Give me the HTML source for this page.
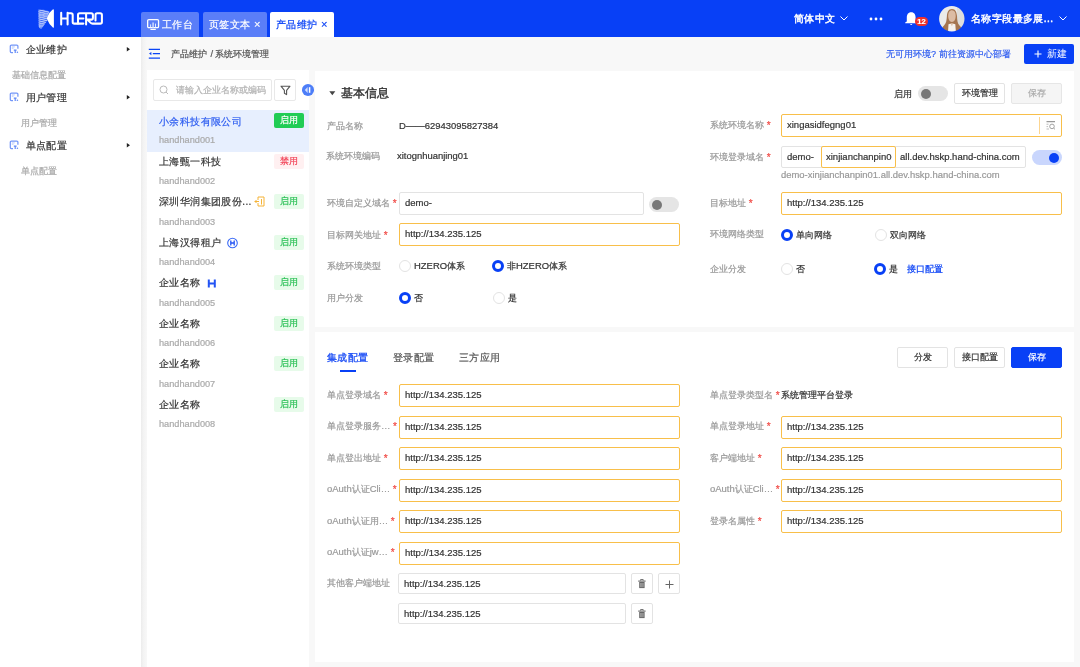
<!DOCTYPE html>
<html><head><meta charset="utf-8">
<style>
*{box-sizing:border-box;margin:0;padding:0}
html,body{width:1080px;height:667px;overflow:hidden;background:#f8f8f8;font-family:"Liberation Sans",sans-serif;color:#333}
div,span{position:absolute;white-space:nowrap}
#hdr{left:0;top:0;width:1080px;height:37px;background:#0840f6}
#side{left:0;top:37px;width:141px;height:630px;background:#fff}
.tab{top:12px;height:25px;background:#5a7ef8;color:#fff;font-size:10px;letter-spacing:0.4px;line-height:25px;border-radius:2px 2px 0 0}
.tab.act{background:#fff;color:#0840f6}
#list{left:147px;top:70px;width:162px;height:597px;background:#fff}
.panel{left:315px;width:759px;background:#fff}
.lbl{font-size:9.45px;color:#999;line-height:12px}
.val{font-size:9.45px;color:#333;line-height:12px}
.req{position:relative;color:#f14a45;font-size:10px;line-height:0;top:0.5px}
.inp{height:23px;border:1px solid #e3e3e3;border-radius:2px;background:#fff;font-size:9.5px;line-height:19px;padding-left:5px;color:#333;overflow:hidden}
.inp.o{border-color:#f8bf4a}
.btn{height:21px;border:1px solid #e3e3e3;border-radius:2px;background:#fff;font-size:9px;line-height:19px;text-align:center;color:#333}
.radio{width:12px;height:12px;border-radius:50%;border:1px solid #e3e3e3;background:#fff}
.radio.on{border:3px solid #0840f6}
.rtxt{font-size:9.45px;color:#333;line-height:12px}
.badge{left:127px;width:30px;height:15px;font-size:9px;line-height:15px;text-align:center;border-radius:2px;background:#e7fbea;color:#2dc158}
.cname{left:12px;font-size:10px;letter-spacing:0.4px;color:#333;line-height:14px}
.ccode{left:12px;font-size:9.2px;color:#aaa;line-height:12px;margin-top:0.5px}
.mi{font-size:10px;letter-spacing:0.4px;color:#333;line-height:14px;margin-left:0.5px}
.si{font-size:9px;color:#aaa;line-height:12px}
.tgl{width:30px;height:15px;border-radius:7.5px;background:#e5e5e5}
.tgl i{position:absolute;left:2.5px;top:2.5px;width:10px;height:10px;border-radius:50%;background:#777}
</style></head><body><div style="left:0;top:0;width:1080px;height:667px;will-change:transform;-webkit-text-stroke:0.2px currentColor">
<!-- HEADER -->
<div id="hdr">
  <svg style="position:absolute;left:36px;top:7px" width="70" height="24" viewBox="36 7 70 24">
    <g fill="none" stroke="#fff" stroke-width="2.05" stroke-linecap="round" stroke-linejoin="round">
      <path d="M61.2 12.7V24.4M61.2 18.5H67.6M67.6 12.7V24.4M67.6 13.2H71Q72.7 13.2 72.7 14.9V21.9Q72.7 23.6 74.4 23.6H83.4"/>
      <path d="M78 23.4V14.9Q78 13.2 79.7 13.2H91.2Q92.9 13.2 92.9 14.9V17.9Q92.9 19.6 91.2 19.6H86.1M78 18.5H83.4M86.1 13.2V24.4M87.6 19.8L90.4 22.6Q91.4 23.6 92.6 23.6H100.2Q101.9 23.6 101.9 21.9V14.9Q101.9 13.2 100.2 13.2H97.2Q95.5 13.2 95.5 14.9V20.4"/>
    </g>
    <defs><clipPath id="hl"><path d="M38.3 9.8Q43 8.8 49.6 11.6L46.9 18.3L47.4 20.6L41.6 28.4Q39.2 29 38.7 26.6Z"/></clipPath></defs><path d="M53.9 10.4Q53.9 8.4 52.4 9.8Q49 12.5 47.2 17.2Q46.7 18.3 47.2 19.4Q49 24 52.4 27Q53.9 28.8 53.9 26.8Z" fill="#fff"/><g clip-path="url(#hl)"><rect x="36" y="7" width="20" height="24" fill="#fff" opacity="0.22"/><g stroke="#fff" stroke-width="0.75" fill="none" opacity="0.7"><path d="M36.0 0.4L56.0 5.4M36.0 2.6L56.0 7.6M36.0 4.8L56.0 9.8M36.0 7.0L56.0 12.0M36.0 9.2L56.0 14.2M36.0 11.4L56.0 16.4M36.0 13.6L56.0 18.6M36.0 15.8L56.0 20.8M36.0 18.0L56.0 23.0M36.0 20.2L56.0 25.2M36.0 22.4L56.0 27.4M36.0 24.6L56.0 29.6M36.0 26.8L56.0 31.8M36.0 29.0L56.0 34.0"/><path d="M36.0 5.4L56.0 0.4M36.0 7.6L56.0 2.6M36.0 9.8L56.0 4.8M36.0 12.0L56.0 7.0M36.0 14.2L56.0 9.2M36.0 16.4L56.0 11.4M36.0 18.6L56.0 13.6M36.0 20.8L56.0 15.8M36.0 23.0L56.0 18.0M36.0 25.2L56.0 20.2M36.0 27.4L56.0 22.4M36.0 29.6L56.0 24.6M36.0 31.8L56.0 26.8M36.0 34.0L56.0 29.0"/></g></g>
  </svg>
  <div class="tab" style="left:141px;width:58px"><svg style="position:absolute;left:6px;top:7px" width="13" height="12" viewBox="0 0 13 12"><rect x="0.65" y="0.65" width="10.9" height="8" rx="1.2" fill="none" stroke="#fff" stroke-width="1.3"/><path d="M3.4 10.4H8.8" stroke="#fff" stroke-width="1.2"/><path d="M3.6 8.4V5.4M8.5 8.4V4.6" stroke="#e6ecfe" stroke-width="1"/><path d="M6.1 8.4V3.6" stroke="#c3d1fc" stroke-width="1.7"/></svg><span style="left:21px;top:0">工作台</span></div>
  <div class="tab" style="left:203px;width:64px"><span style="left:6px;top:0">页签文本</span><span style="left:51px;top:0;font-size:11px">×</span></div>
  <div class="tab act" style="left:270px;width:64px"><span style="left:6px;top:0">产品维护</span><span style="left:51px;top:0;font-size:11px">×</span></div>
  <span style="left:794px;top:12px;font-size:10px;letter-spacing:0.4px;line-height:14px;color:#fff;-webkit-text-stroke:0.45px #fff">简体中文</span>
  <svg style="position:absolute;left:840px;top:16px" width="8" height="5" viewBox="0 0 8 5"><path d="M0.5 0.5L4 4L7.5 0.5" fill="none" stroke="#fff" stroke-width="1"/></svg>
  <svg style="position:absolute;left:869px;top:17px" width="14" height="4"><circle cx="2" cy="2" r="1.4" fill="#fff"/><circle cx="7" cy="2" r="1.4" fill="#fff"/><circle cx="12" cy="2" r="1.4" fill="#fff"/></svg>
  <svg style="position:absolute;left:904px;top:11px" width="14" height="16" viewBox="0 0 14 16"><path d="M7.2 1.2C4 1.2 2.8 3.8 2.8 6.4V10.4L1.2 11.4V12.3H12.2V11.4L11.6 10.4V6.4C11.6 3.8 10.4 1.2 7.2 1.2Z" fill="#fff"/><path d="M6 13Q7.2 14.8 8.4 13Z" fill="#fff"/></svg>
  <div style="left:915px;top:17px;width:13px;height:9px;border-radius:5px;background:#f0302b;color:#fff;font-size:7.5px;font-weight:bold;line-height:9px;text-align:center">12</div>
  <svg style="position:absolute;left:939px;top:6px" width="26" height="26" viewBox="0 0 26 26"><defs><clipPath id="av"><circle cx="12.8" cy="12.7" r="12.7"/></clipPath><filter id="avb" x="-10%" y="-10%" width="120%" height="120%"><feGaussianBlur stdDeviation="0.5"/></filter></defs><g clip-path="url(#av)"><g filter="url(#avb)"><rect width="26" height="26" fill="#ebebea"/><rect x="18" width="8" height="26" fill="#dededc"/><path d="M13 3C9.3 3 8.2 6.5 7.9 10C7.6 14 7.4 17.2 5 19.5C3 21 2.8 24 3.2 26H22.3C22.7 24 22.5 21 20.5 19.5C18.4 17.5 18.2 14 18 10C17.7 6.5 16.6 3 13 3Z" fill="#a57550"/><path d="M13 4.2C10.4 4.2 9.2 6.5 9.2 9.8C9.2 13.5 10.6 16 12.9 16C15.2 16 16.7 13.5 16.7 9.8C16.7 6.5 15.5 4.2 13 4.2Z" fill="#dcbca4"/><path d="M9 26L9.5 18.2Q12.8 16.6 16.3 18.2L16.9 26Z" fill="#f5f2ee"/><path d="M11.9 17.4L12.9 20.2L13.9 17.4Z" fill="#d9b597"/></g></g></svg>
  <span style="left:971px;top:12px;font-size:10px;letter-spacing:0.4px;line-height:14px;color:#fff;-webkit-text-stroke:0.45px #fff">名称字段最多展...</span>
  <svg style="position:absolute;left:1059px;top:16px" width="8" height="5" viewBox="0 0 8 5"><path d="M0.5 0.5L4 4L7.5 0.5" fill="none" stroke="#fff" stroke-width="1"/></svg>
</div>

<!-- SIDEBAR -->
<div style="left:141px;top:37px;width:6px;height:630px;background:linear-gradient(to right,#ececec,#f3f3f3 40%,#f8f8f8)"></div>
<div id="side">
  <svg style="position:absolute;left:9px;top:7px" width="10" height="10" viewBox="9 44 10 10"><path d="M13 52.6H11.4Q10.3 52.6 10.3 51.5V46.1Q10.3 45 11.4 45H16.8Q17.9 45 17.9 46.1V48.8" fill="none" stroke="#7396f8" stroke-width="1.25"/><path d="M11.8 46.9H14.8M11.8 48.2H13.6" stroke="#b3c6fb" stroke-width="0.9"/><path d="M13.8 50.2H16.6M15.2 50.2V53" stroke="#6189f7" stroke-width="1.2"/><circle cx="17.4" cy="52.3" r="0.8" fill="#6189f7"/></svg>
  <span class="mi" style="left:25px;top:6px">企业维护</span>
  <svg style="position:absolute;left:126px;top:9px" width="5" height="7"><path d="M0.8 1L4 3.3L0.8 5.6Z" fill="#222"/></svg>
  <span class="si" style="left:12px;top:32px">基础信息配置</span>
  <svg style="position:absolute;left:9px;top:55px" width="10" height="10" viewBox="9 44 10 10"><path d="M13 52.6H11.4Q10.3 52.6 10.3 51.5V46.1Q10.3 45 11.4 45H16.8Q17.9 45 17.9 46.1V48.8" fill="none" stroke="#7396f8" stroke-width="1.25"/><path d="M11.8 46.9H14.8M11.8 48.2H13.6" stroke="#b3c6fb" stroke-width="0.9"/><path d="M13.8 50.2H16.6M15.2 50.2V53" stroke="#6189f7" stroke-width="1.2"/><circle cx="17.4" cy="52.3" r="0.8" fill="#6189f7"/></svg>
  <span class="mi" style="left:25px;top:54px">用户管理</span>
  <svg style="position:absolute;left:126px;top:57px" width="5" height="7"><path d="M0.8 1L4 3.3L0.8 5.6Z" fill="#222"/></svg>
  <span class="si" style="left:21px;top:80px">用户管理</span>
  <svg style="position:absolute;left:9px;top:103px" width="10" height="10" viewBox="9 44 10 10"><path d="M13 52.6H11.4Q10.3 52.6 10.3 51.5V46.1Q10.3 45 11.4 45H16.8Q17.9 45 17.9 46.1V48.8" fill="none" stroke="#7396f8" stroke-width="1.25"/><path d="M11.8 46.9H14.8M11.8 48.2H13.6" stroke="#b3c6fb" stroke-width="0.9"/><path d="M13.8 50.2H16.6M15.2 50.2V53" stroke="#6189f7" stroke-width="1.2"/><circle cx="17.4" cy="52.3" r="0.8" fill="#6189f7"/></svg>
  <span class="mi" style="left:25px;top:102px">单点配置</span>
  <svg style="position:absolute;left:126px;top:105px" width="5" height="7"><path d="M0.8 1L4 3.3L0.8 5.6Z" fill="#222"/></svg>
  <span class="si" style="left:21px;top:128px">单点配置</span>
</div>

<!-- BREADCRUMB -->
<svg style="position:absolute;left:148px;top:48px" width="13" height="12" viewBox="0 0 13 12"><path d="M0.8 1.4H12M4.8 5.6H12M0.8 10.1H12" stroke="#0b45f6" stroke-width="1.2"/><path d="M3.4 4L1 5.6L3.4 7.2Z" fill="#0b45f6"/></svg>
<span style="left:171px;top:48px;font-size:9px;line-height:12px;color:#555">产品维护</span><span style="left:210.5px;top:48px;font-size:9.45px;line-height:12px;color:#555">/</span><span style="left:215px;top:48px;font-size:9px;line-height:12px;color:#555">系统环境管理</span>
<span style="left:886px;top:48px;font-size:9px;line-height:12px;color:#2e5cf0">无可用环境? 前往资源中心部署</span>
<div style="left:1024px;top:44px;width:50px;height:20px;background:#0840f6;border-radius:2px;color:#fff;font-size:9.5px;line-height:20px"><svg style="position:absolute;left:10px;top:6px" width="8" height="8"><path d="M4 0.5V7.5M0.5 4H7.5" stroke="#fff" stroke-width="1.1"/></svg><span style="left:22.5px;top:0;-webkit-text-stroke:0">新建</span></div>

<!-- LIST -->
<div id="list">
  <div style="left:6px;top:9px;width:119px;height:22px;border:1px solid #e8e8e8;border-radius:2px"><svg style="position:absolute;left:5px;top:5px" width="10" height="10"><circle cx="4.5" cy="4.5" r="3.5" fill="none" stroke="#bbb" stroke-width="1"/><path d="M7 7L9 9" stroke="#bbb"/></svg><span style="left:21.5px;top:4px;font-size:9px;line-height:12px;color:#b3b3b3">请输入企业名称或编码</span></div>
  <div style="left:127px;top:9px;width:22px;height:22px;border:1px solid #e8e8e8;border-radius:2px"><svg style="position:absolute;left:5px;top:5px" width="11" height="11" viewBox="0 0 11 11"><path d="M1 1.2H10L6.6 5.3V9.6L4.4 8.2V5.3Z" fill="none" stroke="#555" stroke-width="1.1" stroke-linejoin="round"/></svg></div>
  <div style="left:154.5px;top:14px;width:12.5px;height:12px;border-radius:50%;background:#4d7ef8"><svg style="position:absolute;left:0;top:0" width="12" height="12" viewBox="0 0 12 12"><path d="M5.6 3V9L2.8 6Z" fill="#d5e0fe"/><path d="M7.6 3.2V8.8" stroke="#fff" stroke-width="1.5"/></svg></div>
  <div style="left:0;top:40px;width:162px;height:42px;background:#e7effe"></div>
  <span class="cname" style="top:45px;color:#2c5cf0">小余科技有限公司</span><span class="ccode" style="top:63.5px">handhand001</span>
  <div class="badge" style="top:43px;background:#20cc55;color:#fff">启用</div>
  <span class="cname" style="top:85px">上海甄一科技</span><span class="ccode" style="top:104px">handhand002</span>
  <div class="badge" style="top:84px;background:#fff0f1;color:#f2465a">禁用</div>
  <span class="cname" style="top:125px">深圳华润集团股份...</span><span class="ccode" style="top:145px">handhand003</span>
  <svg style="position:absolute;left:107px;top:126px" width="11" height="11" viewBox="0 0 11 11"><path d="M4 1H10V10H4V7M4 4V1M7.5 3V8.5" fill="none" stroke="#f5b336" stroke-width="1"/><path d="M0.8 5.5H5M2.5 4L1 5.5L2.5 7" fill="none" stroke="#f5b336" stroke-width="1"/></svg>
  <div class="badge" style="top:124px">启用</div>
  <span class="cname" style="top:166px">上海汉得租户</span><span class="ccode" style="top:185px">handhand004</span>
  <svg style="position:absolute;left:80px;top:167px" width="12" height="12" viewBox="0 0 12 12"><circle cx="5.5" cy="6" r="4.8" fill="none" stroke="#3a6af6" stroke-width="1.1"/><path d="M3.8 3.6V8.4M7.2 3.6V8.4M3.8 6H7.2" stroke="#2354f4" stroke-width="1.3"/></svg>
  <div class="badge" style="top:165px">启用</div>
  <span class="cname" style="top:206px">企业名称</span><span class="ccode" style="top:226px">handhand005</span>
  <svg style="position:absolute;left:60px;top:209px" width="10" height="9" viewBox="0 0 10 9"><path d="M1.8 0.5V8.5M7.8 0.5V8.5M1.8 4.5H7.8" stroke="#2354f4" stroke-width="2"/></svg>
  <div class="badge" style="top:205px">启用</div>
  <span class="cname" style="top:247px">企业名称</span><span class="ccode" style="top:266px">handhand006</span>
  <div class="badge" style="top:246px">启用</div>
  <span class="cname" style="top:287px">企业名称</span><span class="ccode" style="top:307px">handhand007</span>
  <div class="badge" style="top:286px">启用</div>
  <span class="cname" style="top:328px">企业名称</span><span class="ccode" style="top:347px">handhand008</span>
  <div class="badge" style="top:327px">启用</div>
</div>

<!-- PANEL 1 -->
<div class="panel" style="top:71px;height:256px">
  <svg style="position:absolute;left:13.5px;top:20px" width="7" height="5"><path d="M0.3 0.3H6.3L3.3 4.2Z" fill="#444"/></svg>
  <span style="left:26px;top:15px;font-size:12px;letter-spacing:-0.1px;line-height:15px;-webkit-text-stroke:0.4px #333;color:#333">基本信息</span>
  <span class="lbl" style="left:579px;top:17px;color:#333">启用</span>
  <div class="tgl" style="left:603px;top:15px"><i></i></div>
  <div class="btn" style="left:639px;top:12px;width:51px">环境管理</div>
  <div class="btn" style="left:696px;top:12px;width:51px;background:#f5f5f5;border-color:#e6e6e6;color:#aaa">保存</div>

  <span class="lbl" style="left:12px;top:49px">产品名称</span>
  <span class="val" style="left:84px;top:49px">D——62943095827384</span>
  <span class="lbl" style="left:11px;top:79px">系统环境编码</span>
  <span class="val" style="left:82px;top:79px">xitognhuanjing01</span>
  <span class="lbl" style="left:12px;top:126px">环境自定义域名 <span class="req">*</span></span>
  <div class="inp" style="left:84px;top:121px;width:245px">demo-</div>
  <div class="tgl" style="left:334px;top:126px"><i></i></div>
  <span class="lbl" style="left:12px;top:158px">目标网关地址 <span class="req">*</span></span>
  <div class="inp o" style="left:84px;top:152px;width:281px">http://134.235.125</div>
  <span class="lbl" style="left:12px;top:189px">系统环境类型</span>
  <div class="radio" style="left:84px;top:189px"></div><span class="rtxt" style="left:99px;top:189px">HZERO体系</span>
  <div class="radio on" style="left:177px;top:189px"></div><span class="rtxt" style="left:192px;top:189px">非HZERO体系</span>
  <span class="lbl" style="left:12px;top:221px">用户分发</span>
  <div class="radio on" style="left:84px;top:221px"></div><span class="rtxt" style="left:99px;top:221px">否</span>
  <div class="radio" style="left:178px;top:221px"></div><span class="rtxt" style="left:193px;top:221px">是</span>

  <span class="lbl" style="left:395px;top:48px">系统环境名称 <span class="req">*</span></span>
  <div class="inp o" style="left:466px;top:43px;width:281px">xingasidfegng01<div style="left:257px;top:2px;width:1px;height:17px;background:#fcd590"></div><svg style="position:absolute;left:263px;top:5px" width="11" height="11"><path d="M1.5 1.6H10" stroke="#999" stroke-width="1.2"/><path d="M1.5 4.2H3.5M1.5 6.6H3M1.5 9H4" stroke="#aaa" stroke-width="0.8"/><circle cx="7" cy="6.4" r="2.3" fill="none" stroke="#999" stroke-width="0.9"/><path d="M8.7 8.1L10 9.4" stroke="#999" stroke-width="0.9"/></svg></div>
  <span class="lbl" style="left:395px;top:80px">环境登录域名 <span class="req">*</span></span>
  <div class="inp" style="left:466px;top:75px;width:245px;height:22px;border-color:#e3e3e3"></div>
  <span class="val" style="left:472px;top:80px;font-size:9.5px">demo-</span>
  <div class="inp o" style="left:506px;top:75px;width:75px;height:22px;line-height:20px;padding-left:4px">xinjianchanpin0</div>
  <span class="val" style="left:585px;top:80px;font-size:9.5px">all.dev.hskp.hand-china.com</span>
  <div class="tgl" style="left:717px;top:79px;width:30px;background:#c9d6fd"><i style="left:17px;background:#0840f6"></i></div>
  <span class="lbl" style="left:466px;top:98px">demo-xinjianchanpin01.all.dev.hskp.hand-china.com</span>
  <span class="lbl" style="left:395px;top:126px">目标地址 <span class="req">*</span></span>
  <div class="inp o" style="left:466px;top:121px;width:281px">http://134.235.125</div>
  <span class="lbl" style="left:395px;top:157px">环境网络类型</span>
  <div class="radio on" style="left:466px;top:158px"></div><span class="rtxt" style="left:481px;top:158px">单向网络</span>
  <div class="radio" style="left:560px;top:158px"></div><span class="rtxt" style="left:575px;top:158px">双向网络</span>
  <span class="lbl" style="left:395px;top:192px">企业分发</span>
  <div class="radio" style="left:466px;top:192px"></div><span class="rtxt" style="left:481px;top:192px">否</span>
  <div class="radio on" style="left:559px;top:192px"></div><span class="rtxt" style="left:574px;top:192px">是</span>
  <span class="rtxt" style="left:592px;top:192px;color:#0840f6">接口配置</span>
</div>

<!-- PANEL 2 -->
<div class="panel" style="top:332px;height:330px">
  <span style="left:12px;top:19px;font-size:10px;letter-spacing:0.4px;line-height:14px;color:#1a4cf5;-webkit-text-stroke:0.3px #1a4cf5">集成配置</span>
  <div style="left:25px;top:38px;width:16px;height:2px;background:#0840f6"></div>
  <span style="left:78px;top:19px;font-size:10px;letter-spacing:0.4px;line-height:14px;color:#555">登录配置</span>
  <span style="left:144px;top:19px;font-size:10px;letter-spacing:0.4px;line-height:14px;color:#555">三方应用</span>
  <div class="btn" style="left:582px;top:15px;width:51px">分发</div>
  <div class="btn" style="left:639px;top:15px;width:51px">接口配置</div>
  <div class="btn" style="left:696px;top:15px;width:51px;background:#0840f6;border-color:#0840f6;color:#fff">保存</div>

  <span class="lbl" style="left:12px;top:57px">单点登录域名 <span class="req">*</span></span>
  <div class="inp o" style="left:84px;top:52px;width:281px">http://134.235.125</div>
  <span class="lbl" style="left:12px;top:88px">单点登录服务… <span class="req">*</span></span>
  <div class="inp o" style="left:84px;top:84px;width:281px">http://134.235.125</div>
  <span class="lbl" style="left:12px;top:120px">单点登出地址 <span class="req">*</span></span>
  <div class="inp o" style="left:84px;top:115px;width:281px">http://134.235.125</div>
  <span class="lbl" style="left:12px;top:151px">oAuth认证Cli… <span class="req">*</span></span>
  <div class="inp o" style="left:84px;top:147px;width:281px">http://134.235.125</div>
  <span class="lbl" style="left:12px;top:183px">oAuth认证用… <span class="req">*</span></span>
  <div class="inp o" style="left:84px;top:178px;width:281px">http://134.235.125</div>
  <span class="lbl" style="left:12px;top:214px">oAuth认证jw… <span class="req">*</span></span>
  <div class="inp o" style="left:84px;top:210px;width:281px">http://134.235.125</div>
  <span class="lbl" style="left:12px;top:245px">其他客户端地址</span>
  <div class="inp" style="left:83px;top:241px;width:228px;height:21px;line-height:19px">http://134.235.125</div>
  <div class="btn" style="left:316px;top:241px;width:22px;height:21px"><svg style="position:absolute;left:5px;top:4px" width="10" height="11" viewBox="0 0 10 11"><path d="M3.6 2.6V1.5H6.2V2.6" fill="none" stroke="#666" stroke-width="0.9"/><path d="M1.2 3.1H8.6" stroke="#666" stroke-width="1.1"/><path d="M2.2 4H7.6V10.1H2.2Z" fill="#666"/><path d="M3.7 5V9.2M4.9 5V9.2M6.1 5V9.2" stroke="#ccc" stroke-width="0.6"/></svg></div>
  <div class="btn" style="left:343px;top:241px;width:22px;height:21px"><svg style="position:absolute;left:6px;top:5.5px" width="9" height="9"><path d="M4.5 0.5V8.5M0.5 4.5H8.5" stroke="#666" stroke-width="1"/></svg></div>
  <div class="inp" style="left:83px;top:271px;width:228px;height:21px;line-height:19px">http://134.235.125</div>
  <div class="btn" style="left:316px;top:271px;width:22px;height:21px"><svg style="position:absolute;left:5px;top:4px" width="10" height="11" viewBox="0 0 10 11"><path d="M3.6 2.6V1.5H6.2V2.6" fill="none" stroke="#666" stroke-width="0.9"/><path d="M1.2 3.1H8.6" stroke="#666" stroke-width="1.1"/><path d="M2.2 4H7.6V10.1H2.2Z" fill="#666"/><path d="M3.7 5V9.2M4.9 5V9.2M6.1 5V9.2" stroke="#ccc" stroke-width="0.6"/></svg></div>

  <span class="lbl" style="left:395px;top:57px">单点登录类型名 <span class="req">*</span></span>
  <span class="val" style="left:466px;top:57px">系统管理平台登录</span>
  <span class="lbl" style="left:395px;top:88px">单点登录地址 <span class="req">*</span></span>
  <div class="inp o" style="left:466px;top:84px;width:281px">http://134.235.125</div>
  <span class="lbl" style="left:395px;top:120px">客户端地址 <span class="req">*</span></span>
  <div class="inp o" style="left:466px;top:115px;width:281px">http://134.235.125</div>
  <span class="lbl" style="left:395px;top:151px">oAuth认证Cli… <span class="req">*</span></span>
  <div class="inp o" style="left:466px;top:147px;width:281px">http://134.235.125</div>
  <span class="lbl" style="left:395px;top:183px">登录名属性 <span class="req">*</span></span>
  <div class="inp o" style="left:466px;top:178px;width:281px">http://134.235.125</div>
</div>
</div></body></html>
